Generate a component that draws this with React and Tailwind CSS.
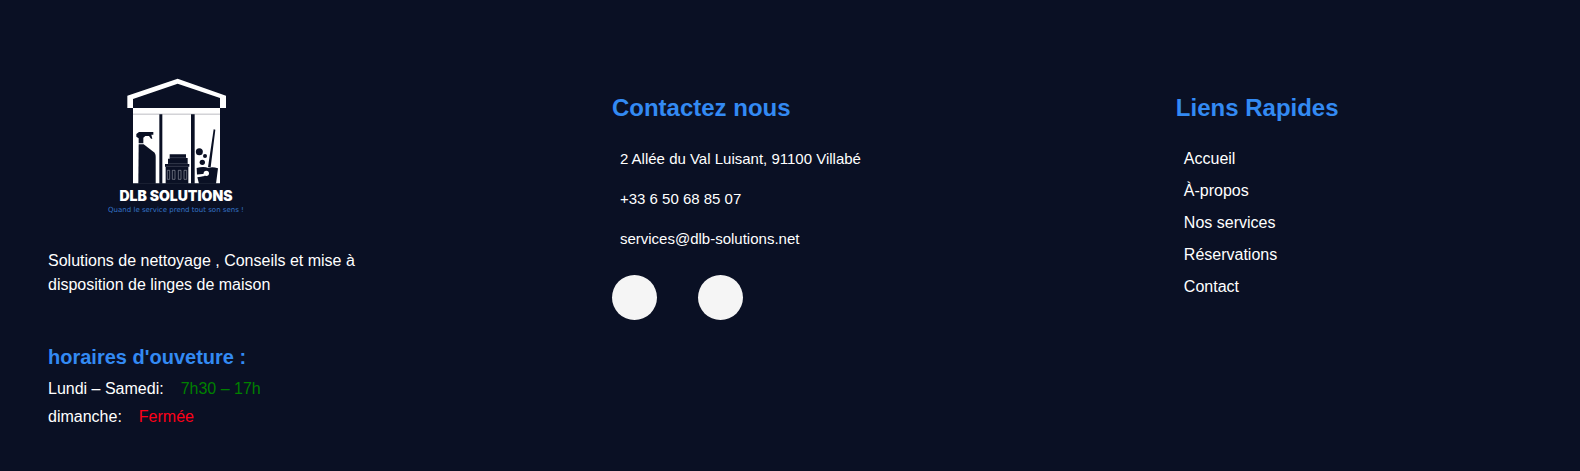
const contacts = [
  { label: "2 Allée du Val Luisant, 91100 Villabé", href: "#adresse" },
  { label: "+33 6 50 68 85 07", href: "tel:+33650688507" },
  { label: "services@dlb-solutions.net", href: "mailto:services@dlb-solutions.net" },
];

const links = ["Accueil", "À-propos", "Nos services", "Réservations", "Contact"];

const hours = [
  { day: "Lundi – Samedi:", value: "7h30 – 17h", color: "text-[#008000]" },
  { day: "dimanche:", value: "Fermée", color: "text-[#ff0018]" },
];

function Logo() {
  return (
    <div className="flex w-64 flex-col items-center">
      <svg width="100" height="106" viewBox="108 24 300 318" aria-hidden="true">
        <path fill="#fff" d="M112 114V77L263 26l145 51v37h-18V84L263 41 129 87v27z" />
        <path fill="#fff" d="M129 114h261v226H129z" />
        <path stroke="#9a9ca5" strokeWidth="2" d="M129 132.500h261" />
        <g fill="#0a1024">
          <path d="M208 133h9v208h-9zM303 133h11v208h-11z" />
          <path d="M139 192l8-6h43v8h-6l3 12h-4l-6-8h-11l-6 5v17h-14v-15l-7-5z" />
          <path d="M146 223h15l31 24c4 4 5 7 5 13v81h-52z" />
          <path d="M239 253h49v11h5v18h5v8h-3v51h-68v-51h-2v-8h9v-16h5z" />
          <path d="M371 178l5 1-14 113h-8z" />
          <circle cx="328" cy="245" r="10.500" />
          <circle cx="345" cy="258" r="6" />
          <circle cx="337" cy="277" r="8" />
          <path d="M320 294c14-4 26-4 35 0 8-3 17-3 29 1l-6 46h-51l-5-19 22-4v-4h-23z" />
        </g>
        <path stroke="#777b88" strokeWidth="1.200" d="M239 263h50M235 281h58M228 289h67" />
        <g fill="none" stroke="#b8bac2" strokeWidth="1.500">
          <path d="M232 301h7v27h-7zM247 301h8v27h-8zM265 301h8v27h-8zM282 301h8v27h-8z" />
        </g>
        <path fill="#fff" d="M320 314l23-3v6l-23 3z" />
        <circle cx="349" cy="310" r="8" fill="#fff" />
      </svg>
      <p className="mt-1 font-['Inter',sans-serif] text-sm leading-4 font-black whitespace-nowrap">
        DLB SOLUTIONS
      </p>
      <p className="font-['DejaVu_Sans',sans-serif] text-[7px] leading-3 whitespace-nowrap text-[#3474c8]">
        Quand le service prend tout son sens !
      </p>
    </div>
  );
}

export default function App() {
  return (
    <footer className="flex min-h-screen flex-wrap justify-between bg-[#0a1024] px-12 pt-[78px] pb-10 font-['Liberation_Sans',Arial,sans-serif] text-base text-white">
      <section className="w-[24%]">
        <Logo />
        <p className="mt-8 pt-px leading-6">
          Solutions de nettoyage , Conseils et mise à disposition de linges de maison
        </p>
        <h3 className="mt-12 text-xl leading-6 font-bold text-[#338af3]">horaires d'ouveture :</h3>
        <ul className="mt-1.5">
          {hours.map((h) => (
            <li key={h.day} className="flex gap-[17px] leading-7">
              <span>{h.day}</span>
              <span className={h.color}>{h.value}</span>
            </li>
          ))}
        </ul>
      </section>

      <section className="w-[24%] pt-3">
        <h2 className="text-2xl leading-9 font-bold text-[#338af3]">Contactez nous</h2>
        <ul className="mt-[13px] pl-2">
          {contacts.map((c) => (
            <li key={c.label} className="text-[15px] leading-10">
              <a href={c.href}>{c.label}</a>
            </li>
          ))}
        </ul>
        <div className="mt-4 flex gap-[41px]">
          <a href="#facebook" aria-label="Facebook" className="size-[45px] rounded-full bg-[#f5f5f5]" />
          <a href="#instagram" aria-label="Instagram" className="size-[45px] rounded-full bg-[#f5f5f5]" />
        </div>
      </section>

      <nav className="w-[24%] pt-3">
        <h2 className="text-2xl leading-9 font-bold text-[#338af3]">Liens Rapides</h2>
        <ul className="mt-[17px] pl-2">
          {links.map((l) => (
            <li key={l} className="leading-8">
              <a href="#">{l}</a>
            </li>
          ))}
        </ul>
      </nav>
    </footer>
  );
}
